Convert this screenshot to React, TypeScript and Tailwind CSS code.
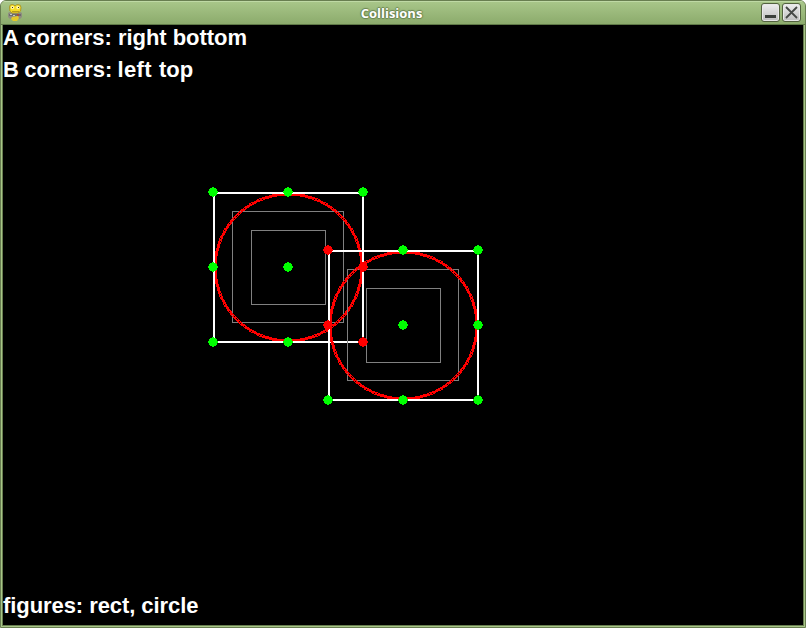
import React from "react";

const GREEN = "#00ff00";
const RED = "#ff0000";

// Pixels of a one pixel wide circle, stepped in 1/64 pixel fixed point.
function ring(cx: number, cy: number, r: number): string {
  const seen = new Set<string>();
  const four = (a: number, b: number) => {
    for (const x of [cx - a, cx + a]) {
      for (const y of [cy - b, cy + b]) {
        seen.add(`M${x} ${y}h1v1h-1z`);
      }
    }
  };
  let ix = 0;
  let iy = r * 64;
  let h = 0;
  let i = r;
  do {
    h = (ix + 24) >> 6;
    i = (iy + 24) >> 6;
    four(h, i);
    four(i, h);
    ix += Math.floor(iy / r);
    iy -= Math.floor(ix / r);
  } while (i > h);
  return Array.from(seen).join("");
}

function Shape({ x, y }: { x: number; y: number }) {
  return (
    <g fill="none">
      <rect x={x + 38.5} y={y + 38.5} width="74" height="74" stroke="#808080" />
      <rect x={x + 19.5} y={y + 19.5} width="111" height="111" stroke="#808080" />
      {[74.5, 73.5, 72.5].map((r) => (
        <path key={r} d={ring(x + 75, y + 75, r)} fill={RED} />
      ))}
      <rect x={x + 1} y={y + 1} width="149" height="149" stroke="#fff" strokeWidth="2" />
    </g>
  );
}

function Dots({ x, y, hits }: { x: number; y: number; hits: string[] }) {
  const spots = ["0,0", "75,0", "150,0", "0,75", "75,75", "150,75", "0,150", "75,150", "150,150"];
  return (
    <g>
      {spots.map((s) => {
        const [dx, dy] = s.split(",").map(Number);
        return (
          <path
            key={s}
            transform={`translate(${x + dx} ${y + dy})`}
            d="M-1-5H1V-4H3V-3H4V-1H5V1H4V3H3V4H1V5H-1V4H-3V3H-4V1H-5V-1H-4V-3H-3V-4H-1Z"
            fill={hits.includes(s) ? RED : GREEN}
          />
        );
      })}
    </g>
  );
}

function AppIcon() {
  return (
    <svg className="absolute left-[6px] top-[2px]" width="17" height="19" viewBox="0 0 17 19">
      <path d="M1 10l2-1h10l2 1v4l-2 2H3l-2-2z" fill="#8f8d80" />
      <path d="M2.500 4Q2.500 1.500 5 1.500Q7 1.500 8 3Q9 1.500 11 1.500Q14 1.500 14 4.500Q14.500 9 11 10H5Q2 9 2.500 4z" fill="#f3db24" stroke="#a18b22" strokeWidth=".8" />
      <circle cx="5.500" cy="4.500" r="1.700" fill="#fff3a0" />
      <circle cx="11" cy="4.500" r="1.700" fill="#fff3a0" />
      <path d="M5 4h1v1H5zM11 4h1v1h-1z" fill="#3c3820" />
      <path d="M5 8h7v1H5z" fill="#b69a1c" />
      <path d="M2 11h12v2H2z" fill="#6c6c6c" />
      <path d="M3 11h2v1H3zM6 12h2v1H6z" fill="#c8c8c4" />
      <path d="M10 11h2v2h-2z" fill="#a34b40" />
      <path d="M5 14l6-1 1 2-2 3H6l-2-2z" fill="#e3c928" />
    </svg>
  );
}

function WindowButton({ children }: { children: React.ReactNode }) {
  return (
    <div className="h-[19px] w-[19px] rounded-[3px] border border-[#53623f] bg-gradient-to-b from-[#eeeeee] to-[#bdbdbd] shadow-[inset_0_0_0_1px_#e8e8e8]">
      <svg width="17" height="17" viewBox="0 0 17 17">{children}</svg>
    </div>
  );
}

export default function App() {
  return (
    <div className="h-[628px] w-[806px] bg-white">
      <div className="flex h-full w-full flex-col overflow-hidden rounded-t-[6px] border border-[#687e50] bg-[#a8c688]">
        <header className="relative flex h-[24px] shrink-0 items-center justify-center border-b border-[#5f7947] bg-gradient-to-b from-[#a9c78a] to-[#8cab6c] shadow-[inset_0_1px_0_#bfd9a5]">
          <AppIcon />
          <span className="relative -left-[11.5px] font-['Open_Sans',sans-serif] text-[13px] font-bold leading-[18px] text-white [text-shadow:1px_0_1px_#6b8550,-1px_0_1px_#6b8550,0_1px_1px_#6b8550,0_-1px_1px_#6b8550]">
            Collisions
          </span>
          <div className="absolute right-[4px] top-[2px] flex gap-[2px]">
            <WindowButton>
              <path d="M3 11h11v3H3z" fill="#3b3f3b" />
            </WindowButton>
            <WindowButton>
              <path d="M3 3l11 11M14 3l-11 11" stroke="#454845" strokeWidth="1.800" />
            </WindowButton>
          </div>
        </header>
        <main className="mx-px mb-px min-h-0 flex-1 border-x border-b border-[#687e50] bg-black">
          <svg
            width="800"
            height="600"
            viewBox="3 25 800 600"
            shapeRendering="crispEdges"
            className="block"
          >
            <Shape x={213} y={192} />
            <Shape x={328} y={250} />
            <Dots x={213} y={192} hits={["150,75", "150,150"]} />
            <Dots x={328} y={250} hits={["0,0", "0,75"]} />
            <g fill="#fff" fontFamily="'Liberation Sans', Arial, sans-serif" fontWeight="700" fontSize="22">
              <text x="3" y="45" textLength="244">A corners: right bottom</text>
              <text x="3" y="77">
                B <tspan x="24.300">corners: </tspan>
                <tspan x="117.500" textLength="34">left</tspan>{" "}
                <tspan x="159">top</tspan>
              </text>
              <text x="3" y="613" textLength="195.500">figures: rect, circle</text>
            </g>
          </svg>
        </main>
      </div>
    </div>
  );
}
